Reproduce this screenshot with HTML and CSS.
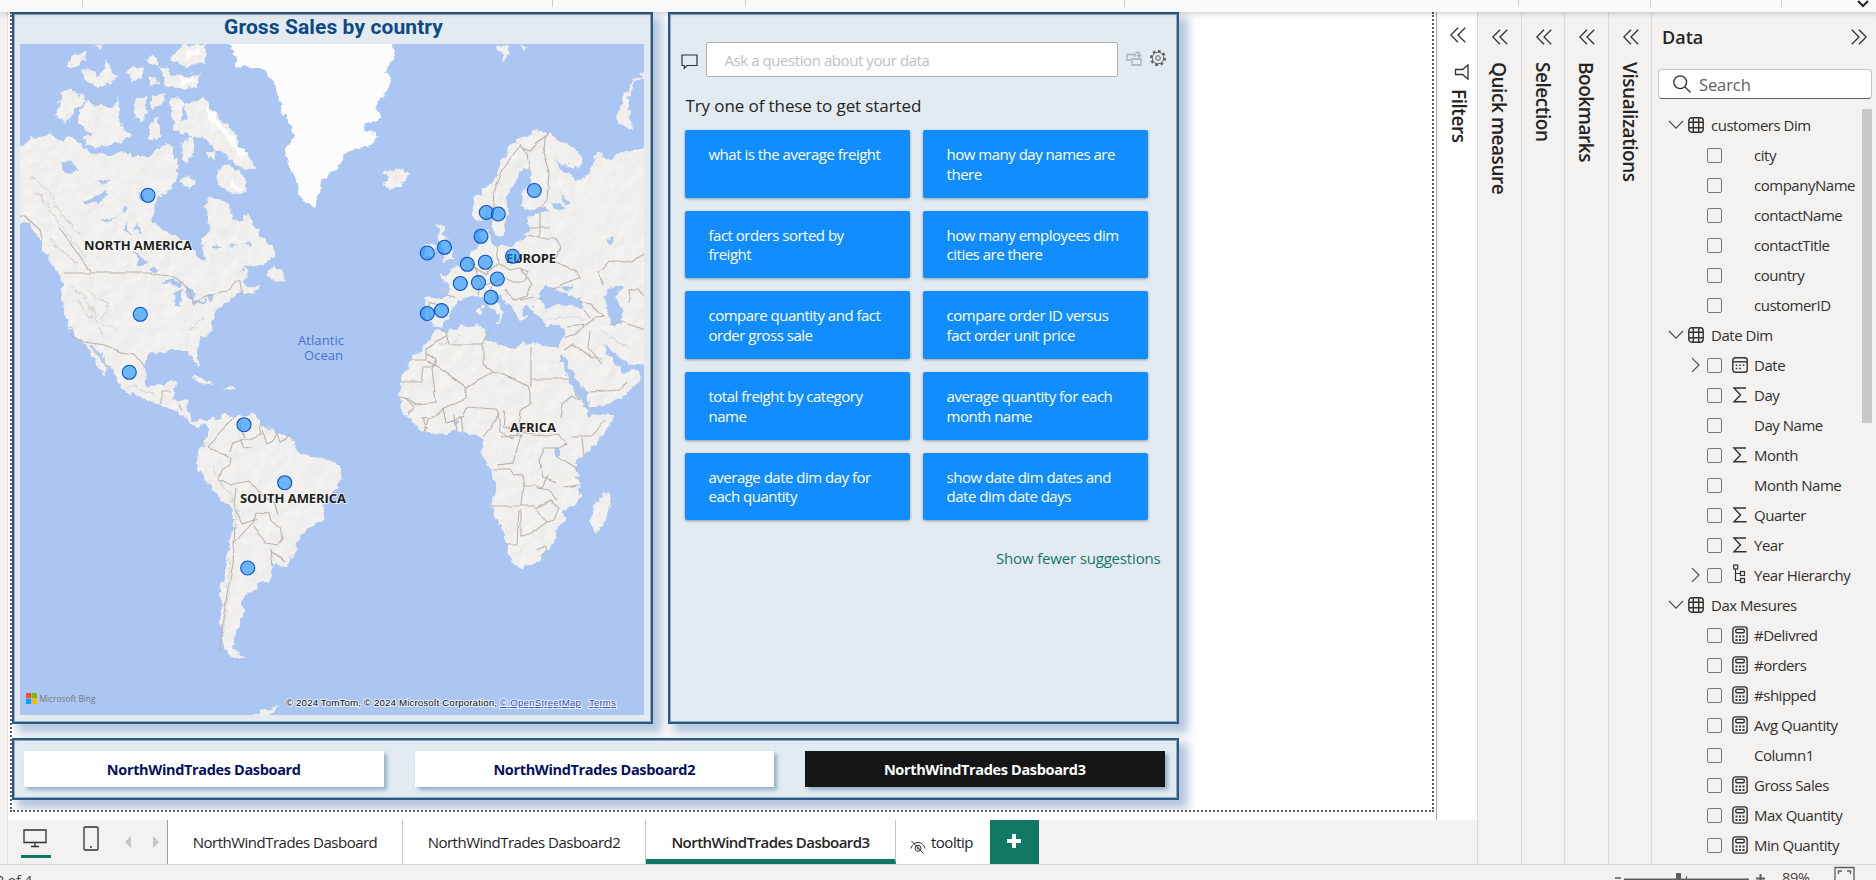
FILE: index.html
```html
<!DOCTYPE html>
<html lang="en">
<head>
<meta charset="utf-8">
<title>NorthWindTrades</title>
<link rel="stylesheet" href="styles.css">
</head>
<body>
<svg width="0" height="0" class="defs" aria-hidden="true">
  <symbol id="chev2" viewBox="0 0 16 16"><path d="M8 .8.8 8 8 15.200M15.200.8 8 8l7.200 7.200"/></symbol>
  <symbol id="down" viewBox="0 0 16 16"><path d="M1 4l7 7.200L15 4"/></symbol>
  <symbol id="right" viewBox="0 0 16 16"><path d="M4 1.200l7 6.800-7 6.800"/></symbol>
  <symbol id="table" viewBox="0 0 16 16"><rect x=".8" y=".8" width="14.400" height="14.400" rx="3"/><path d="M5.300 1v14M10.700 1v14M1 5.300h14M1 10.700h14"/></symbol>
  <symbol id="sigma" viewBox="0 0 16 16"><path d="M14 1H2l6.500 7L2 14.800h12.500"/></symbol>
  <symbol id="cal" viewBox="0 0 16 16"><rect x=".8" y=".8" width="14.400" height="14.400" rx="2.500"/><path d="M1 4.800h14"/><path d="M7.200 8.200h1.600M10.800 8.200h1.600M3.700 11.500h1.600M7.200 11.500h1.600M3.700 8.200h1.600"/></symbol>
  <symbol id="tree" viewBox="0 0 16 20"><path d="M3.500 5v11.500h5M3.500 9.500h5"/><rect x="1.700" y="1" width="4" height="4"/><rect x="8.500" y="7.500" width="4" height="4"/><rect x="8.500" y="14.500" width="4" height="4"/></symbol>
  <symbol id="calc" viewBox="0 0 16 18"><rect x=".9" y=".9" width="14.200" height="16.200" rx="2.600"/><rect x="3.800" y="3.200" width="8.400" height="3.600" rx="1"/><path stroke-width="2" d="M3.500 10.500h2M7 10.500h2M10.500 10.500h2M3.500 14h2M7 14h2M10.500 14h2"/></symbol>
</svg>
<div class="app">
  <header class="ribbon">
    <i></i><i></i><i></i><i></i><i></i><i></i><i></i>
    <svg viewBox="0 0 12 8"><path d="M1 1l5 5 5-5"/></svg>
  </header>
  <div class="main">
    <div class="rail"></div>
    <div class="work">
      <div class="stage">
        <div class="canvas">
          <div class="page">
            <section class="card map-card">
              <h2>Gross Sales by country</h2>
              <div class="map">
                <svg viewBox="20 44 624 671" width="624" height="671">
                  <defs>
                    <filter id="rough" x="0" y="0" width="100%" height="100%"><feTurbulence type="fractalNoise" baseFrequency=".12" numOctaves="3" seed="4"/><feDisplacementMap in="SourceGraphic" scale="9" xChannelSelector="R" yChannelSelector="G"/></filter>
                    <filter id="fine" x="0" y="0" width="100%" height="100%"><feTurbulence type="fractalNoise" baseFrequency=".06" numOctaves="2" seed="7"/><feDisplacementMap in="SourceGraphic" scale="4" xChannelSelector="R" yChannelSelector="G"/></filter>
                    <filter id="relief" x="0" y="0" width="100%" height="100%"><feTurbulence type="fractalNoise" baseFrequency=".07" numOctaves="3" seed="11" result="n"/><feDiffuseLighting in="n" surfaceScale=".7" diffuseConstant="1.060" lighting-color="#f3f2ef" result="l"><feDistantLight azimuth="225" elevation="68"/></feDiffuseLighting><feComposite in="l" in2="SourceGraphic" operator="in"/></filter>
                  </defs>
                  <rect x="20" y="44" width="624" height="671" fill="#abc6f2"/>
                  <g filter="url(#rough)">
                    <g fill="#f1f0ed" filter="url(#relief)">
                      <path d="M10 150L28 143 32 137 42 138 50 133 58 140 72 138 80 142 84 150 95 152 110 155 122 151 132 157 147 157 158 148 166 142 172 145 174 158 180 165 176 178 170 190 158 195 155 202 153 212 155 222 162 230 175 235 188 242 194 250 200 260 204 258 203 248 202 240 210 232 208 220 206 205 208 197 220 199 231 207 234 222 240 220 248 214 254 222 262 238 272 245 275 257 262 264 248 266 238 275 246 270 248 276 243 284 250 288 262 284 255 292 243 296 240 290 230 300 218 308 212 320 213 330 200 340 195 350 196 358 200 365 197 368 193 358 188 350 172 350 160 353 150 355 144 362 144 372 145 385 150 388 155 386 165 386 168 382 177 381 174 390 172 399 180 400 189 402 188 415 193 420 200 421 207 421 215 418 225 413 230 418 240 415 255 416 262 425 275 432 290 437 297 450 305 455 320 458 335 463 342 470 341 478 333 492 325 500 323 520 310 527 300 535 297 548 290 560 285 567 272 565 273 575 268 582 256 583 255 592 245 594 243 603 243 617 236 630 234 643 232 648 245 658 235 659 225 650 222 640 220 625 222 600 222 585 226 570 230 545 233 520 232 508 222 500 212 492 205 478 197 467 197 460 199 448 205 442 210 430 207 426 193 425 183 416 165 406 150 401 138 396 122 389 119 382 112 370 103 357 94 345 90 344 98 357 106 369 107 375 99 368 92 355 86 344 78 340 72 330 64 315 61 300 62 285 60 275 52 262 42 250 42 240 34 230 25 222 10 217Z"/>
                      <path d="M80 110L88 102 100 105 112 108 119 97 118 115 125 130 132 137 118 143 100 148 85 145 83 138 92 134 80 125ZM62 92L70 89 82 95 86 103 75 108 70 120 64 124 57 115 60 100ZM160 65L175 77 200 74 198 87 175 88 163 84ZM170 58L182 45 205 44 205 62 185 66ZM82 70L92 68 98 78 107 60 112 72 118 78 110 82 97 88 85 80ZM66 68L75 53 86 52 82 62 72 70ZM127 72L135 65 143 68 143 80 132 82ZM150 76l6 0 2 8-8 2ZM133 100L145 97 148 115 140 123 135 112ZM152 96L165 94 162 105 152 108ZM150 120L158 118 162 138 150 140ZM148 57l10 2 0 7-8-3ZM95 44l10 2-4 5ZM170 100L180 96 183 108 180 122 188 118 184 104 205 99 215 112 228 125 238 138 240 150 252 160 256 168 248 172 232 160 215 150 205 138 190 137 175 130 170 115ZM222 165L235 168 242 175 248 190 240 196 228 190 215 180ZM180 180L190 175 197 185 187 190ZM184 140L194 138 194 152 187 165 182 158ZM208 152l8 0-2 8-6-2ZM266 276l8-10 8 5 4 8-10 1Z"/>
                      <path d="M383 172L392 170 405 168 409 175 402 184 390 188 383 184 387 178ZM497 44L510 46 505 62 498 52ZM519 46l9 0-4 5ZM650 68L632 85 627 100 633 128 622 126 616 118 620 105 625 92 635 78Z"/>
                      <path d="M660 145L635 150 620 152 606 160 596 150 594 162 590 172 578 180 564 172 553 160 570 168 580 165 582 155 572 146 560 142 548 132 535 130 520 138 508 148 500 165 493 182 480 192 472 200 472 218 480 220 488 215 492 222 495 235 502 236 505 222 508 212 506 200 510 190 517 180 524 168 532 172 530 182 522 192 521 205 526 210 545 207 550 212 538 213 528 217 530 228 526 232 522 240 510 245 496 246 490 240 489 228 481 232 481 243 472 252 463 262 455 268 448 274 440 274 442 280 449 285 450 298 440 299 426 297 424 303 427 308 425 318 428 322 436 326 444 325 450 315 454 308 460 300 470 297 478 296 484 300 492 310 500 316 499 322 506 313 500 307 494 296 492 290 500 295 508 303 515 312 520 322 525 318 521 308 530 305 536 312 545 325 558 325 566 327 563 338 559 347 540 345 522 342 515 349 495 343 484 338 486 330 480 325 460 327 445 332 437 328 428 340 420 352 412 360 402 375 400 390 401 405 403 412 410 420 420 430 430 435 448 433 462 430 470 435 478 437 484 440 482 450 484 460 492 470 495 485 492 500 491 506 498 520 503 535 508 550 512 565 522 567 538 561 550 548 556 538 557 530 565 520 562 512 575 505 580 500 580 490 577 475 575 465 585 453 595 445 605 432 612 420 613 413 600 415 590 415 586 408 580 400 573 390 567 376 560 360 563 354 569 366 575 375 585 390 590 405 592 408 610 402 625 395 635 385 642 378 636 372 630 370 625 374 618 367 608 353 602 345 610 348 622 361 635 365 660 366Z"/>
                      <path d="M437 223L445 227 443 235 450 245 455 258 440 263 446 252 438 240ZM428 243L436 246 434 257 424 258ZM188 377L200 377 214 385 200 383ZM222 388L232 386 236 391ZM608 492L611 500 606 515 602 528 596 533 591 528 592 512 593 503 602 498ZM492 320l9 0-2 3ZM479 306l4 0 0 9-4 0ZM252 715l12-5 14-4-8 9Z"/>
                    </g>
                    <path fill="#fcfcfc" d="M228 40L235 55 235 66 250 68 265 70 275 85 279 100 283 115 290 125 294 135 286 150 288 165 295 180 298 195 308 203 315 207 318 195 322 180 332 170 338 168 345 155 355 150 370 145 381 134 366 130 362 125 380 118 375 105 385 95 390 80 384 70 395 58 392 40Z"/>
                    <path class="snow" d="M180 82l14-4M186 56l14-5M205 108l12 14 14 16 12 18M230 182l12 8"/>
                    <g fill="#abc6f2">
                      <path d="M540 290L548 285 560 292 572 296 585 301 583 308 560 305 545 309 540 302ZM608 290L616 284 622 288 614 296 622 305 620 326 610 324 607 308 603 298ZM560 286l14-3-8 8ZM160 283l12-5 12 3-6 5ZM175 292l7-4-2 18-4 0ZM186 286l10 6-2 10-6-6ZM191 304l14-5 2 3-14 5ZM206 297l10-2-4 5ZM135 250l6 6 6 8-6 2-5-8ZM150 267l5 1 5 4-8-2ZM60 162l12 1 8 8-14 2ZM86 200l16-6 8-2-14 12-8 1ZM96 180l14 0-6 4ZM98 220l20-4-12 6ZM136 194l8 2-2 6ZM122 206l8 4-6 2ZM134 220l8 14-6-4ZM126 222l5 12-5-3ZM550 202l16 5-6 4ZM560 190l8 12-4 3ZM553 448l7 0 0 8-6 0ZM212 246l6-3 4 3-6 2ZM228 247l7-2 3 3ZM244 243l8-1 0 5ZM606 240l8-3-4 9ZM454 421l3-2 0 9Z"/>
                    </g>
                  </g>
                  <g class="borders" filter="url(#fine)">
                    <path d="M63 273H150L160 275 172 276 182 283 190 290 192 304 206 297 220 291 228 290 236 281 240 282 242 296M20 217L26 215 40 230 42 240M70 334L85 342 105 345 121 352 134 354 144 367M60 228L90 272M162 403l0-11 9 0M178 404l4 8"/>
                    <path d="M208 447L220 432 227 425 236 416M208 447l12 6 11 5-1 6-8 6-3 9 12 6 7-2 11-2 12 14 14 8 3 12M230 452l3-10 12-4-5-16M240 438l4 10 8-1M245 440l16-6-2-8M262 430l5 14 6-3 4-8M277 433l3 9 6-3 3-6M236 488l-2 18 7 18M241 524l12-4 4-8 12 1 2 8 9 6 3 12-5 6-13-2-12-17M270 548l2 17M270 550l14 12M235 524l-2 40-6 30-5 30-2 28M256 518l-22 24"/>
                    <path d="M492 222l2-30 10-25 15-20 11 4 10-10 8-6M530 172l-3-18-8-9M548 132l-5 20 6 20-2 28-7 10M528 235l12 3 16 0 5 10-5 10M530 228h20M540 213l0 25M497 246l2 18 10 6 10-2 10 4-4 8-12 3-10-5-10 4-4 8M498 264l-12 10-8-4-8-8M472 262l6 14 4 8M455 297l-10-2M478 296l2-10 10-4M528 258l26 4 22 8 4 8-18 6-10 5M520 268l12 16-5 12-12 4-10-10M520 300l14-3 6 2M430 302l0 18M454 308l-26-6M578 302l14 2 12 12-14 2-6-8M566 327l20-2 8-6M600 272l10-12 22 3 12-10M603 285l-5-14M610 326l14-4 20 8M590 330l-2 18 14 16M564 338l12-4 8-8M564 350l10-6 18 14 10 1M628 304l2-14 8-2 6 8"/>
                    <path d="M412 360h14l0-12 20-12M425 352l11 8 0 6-12 0-2 16-22 0M427 360l39 28 27-16 8 2 27 12 2 6 0 12-9 8-3 20-15-6 2-16M446 332l3 12 34 0 0 20 10 8M483 344l6-12M531 347v40M531 379l38 0M436 360l-4 8 4 34-20 2-6-4-10-2M466 388l0 10-22 10-6 8-10 2-3 16M443 410l3 12 16-5 4-10 30 2 3 4-8 14-8 10M454 414l2 18M460 416l2 16M498 412l2 20 13 6 6-6 28 4 12-2 8 10-8 4-14 0-6 12 4 18 14 5M501 436l20-1-8 28-16 2M494 469h16l4 6 8-1 2 12 12 0 6 2 6-12M524 486l-2 20-32 0M522 506l12 0 12 16-16 12-9 2 0-26M519 510l-2 34-12 0M546 522l8-2 5-12-8-8-16 8M536 488l14 2 6 10M563 487l16-2M556 455l22 14M582 438l2 20M560 418l2-14 10-8 8 4M572 436l20 0 14-16M590 392l30-2 8-8M537 549l8-4 2 6-8 4M403 398l12 8-8 8M428 430l-6-12 6-1"/>
                  </g>
                  <g class="ridges" filter="url(#rough)">
                    <path d="M30 175l20 18 10 20 20 22M34 190l16 18 18 28 18 20M50 240l16 14 14 12M70 285l16 14 10 18M76 300l20 22 6 14M88 290l20 16-6 16 14 10M210 466l14 20 12 20 0 20M230 560l-3 40-4 38M205 316l-18 16M90 345l14 18 12 14M130 385l26 10M440 345l20-8M440 290l8 0M545 318l40 0M600 330l30 20M575 388l10 18"/>
                  </g>
                  <g class="pins">
                    <circle cx="148" cy="195.300" r="7"/><circle cx="140.300" cy="314.300" r="7"/><circle cx="129.300" cy="372.300" r="7"/><circle cx="244" cy="424.700" r="7"/><circle cx="284.700" cy="482.700" r="7"/><circle cx="247.700" cy="568" r="7"/>
                    <circle cx="534.300" cy="190.500" r="7"/><circle cx="486.300" cy="212.500" r="7"/><circle cx="498.300" cy="214" r="7"/><circle cx="481" cy="236.300" r="7"/><circle cx="427.300" cy="253" r="7"/><circle cx="444.500" cy="247.300" r="7"/><circle cx="467.300" cy="264.300" r="7"/><circle cx="485.300" cy="262.300" r="7"/><circle cx="460.300" cy="283.500" r="7"/><circle cx="478.500" cy="282.600" r="7"/><circle cx="497.300" cy="279" r="7"/><circle cx="491" cy="297.300" r="7"/><circle cx="427.300" cy="313.500" r="7"/><circle cx="441.500" cy="310.500" r="7"/>
                  </g>
                  <g class="places">
                    <text x="84" y="250" textLength="108">NORTH AMERICA</text>
                    <text x="506" y="263" textLength="50">EUROPE</text>
                    <text x="510" y="432" textLength="46">AFRICA</text>
                    <text x="240" y="503" textLength="106">SOUTH AMERICA</text>
                  </g>
                  <g class="pins"><circle cx="512.600" cy="256.300" r="7"/></g>
                  <g class="ocean"><text x="298" y="345" textLength="46">Atlantic</text><text x="304" y="360" textLength="39">Ocean</text></g>
                  <rect x="26" y="693" width="5.200" height="5.200" fill="#f25022"/><rect x="31.800" y="693" width="5.200" height="5.200" fill="#7fba00"/><rect x="26" y="698.800" width="5.200" height="5.200" fill="#00a4ef"/><rect x="31.800" y="698.800" width="5.200" height="5.200" fill="#ffb900"/>
                  <text class="bing" x="39.500" y="702" textLength="56" lengthAdjust="spacingAndGlyphs">Microsoft Bing</text>
                  <g class="credit"><text x="286" y="706" textLength="211">© 2024 TomTom, © 2024 Microsoft Corporation,</text><text class="lnk" x="500" y="706" textLength="81">© OpenStreetMap</text><text class="lnk" x="589" y="706" textLength="27">Terms</text></g>
                </svg>
              </div>
            </section>
            <section class="card qna">
              <div class="ask">
                <svg class="ic comment" viewBox="0 0 17 16"><path d="M1 1h15v10.500H6L3.300 14.300v-2.800H1z"/></svg>
                <div class="ask-box">Ask a question about your data</div>
                <svg class="ic conv" viewBox="0 0 16 15"><path d="M5 9H1V3.500h8V6M6 8h9v6H6zM9.500 1.500H13V6M11 4l2 2 2-2"/></svg>
                <svg class="ic gear" viewBox="0 0 16 16"><circle cx="8" cy="8" r="2.300"/><circle cx="8" cy="8" r="5.800"/><circle cx="8" cy="8" r="7" class="teeth" pathLength="80"/></svg>
              </div>
              <h3>Try one of these to get started</h3>
              <div class="tiles">
                <div>what is the average freight</div><div>how many day names are<br>there</div>
                <div>fact orders sorted by<br>freight</div><div>how many employees dim<br>cities are there</div>
                <div>compare quantity and fact<br>order gross sale</div><div>compare order ID versus<br>fact order unit price</div>
                <div>total freight by category<br>name</div><div>average quantity for each<br>month name</div>
                <div>average date dim day for<br>each quantity</div><div>show date dim dates and<br>date dim date days</div>
              </div>
              <div class="fewer">Show fewer suggestions</div>
            </section>
            <nav class="card navs">
              <div>NorthWindTrades Dasboard</div><div>NorthWindTrades Dasboard2</div><div class="on">NorthWindTrades Dasboard3</div>
            </nav>
          </div>
        </div>
        <aside class="filters">
          <svg class="ic c2"><use href="#chev2"/></svg>
          <svg class="ic funnel" viewBox="0 0 15 16"><path d="M14 1v14L8.500 10.500H1.500v-5H8.500z"/></svg>
          <span>Filters</span>
        </aside>
      </div>
      <div class="tabs">
        <div class="modes">
          <span class="mode"><svg class="ic" width="24" height="19" viewBox="0 0 24 19"><path d="M1 1h22v12.500H1zM12 13.500V17M8 17.500h8"/></svg></span>
          <svg class="ic phone" width="16" height="25" viewBox="0 0 16 25"><rect x="1" y="1" width="14" height="23" rx="1"/><path d="M7 21h2"/></svg>
          <svg class="arr" width="36" height="12" viewBox="0 0 36 12"><path d="M7 0v12L1 6zM29 0v12l6-6z"/></svg>
        </div>
        <div class="tab t1">NorthWindTrades Dasboard</div>
        <div class="tab t2">NorthWindTrades Dasboard2</div>
        <div class="tab t3">NorthWindTrades Dasboard3</div>
        <div class="tab t4"><svg class="ic" width="16" height="14" viewBox="0 0 16 14"><path d="M1 8.500C2 4.500 5 2.500 8 2.500s6 2 7 6M1.500 1l12 12.500"/><circle cx="8" cy="8.300" r="3"/><circle cx="8" cy="8.300" r=".8"/></svg>tooltip</div>
        <div class="add"><svg width="14" height="14" viewBox="0 0 14 14"><path d="M7 0v14M0 7h14"/></svg></div>
      </div>
    </div>
    <aside class="pane p1"><svg class="ic c2"><use href="#chev2"/></svg><span>Quick measure</span></aside>
    <aside class="pane p2"><svg class="ic c2"><use href="#chev2"/></svg><span>Selection</span></aside>
    <aside class="pane p3"><svg class="ic c2"><use href="#chev2"/></svg><span>Bookmarks</span></aside>
    <aside class="pane p4"><svg class="ic c2"><use href="#chev2"/></svg><span>Visualizations</span></aside>
    <aside class="data">
      <div class="data-head"><b>Data</b><svg class="ic c2 flip"><use href="#chev2"/></svg></div>
      <div class="search"><svg class="ic" width="18" height="18" viewBox="0 0 18 18"><circle cx="7.200" cy="7.200" r="6.400"/><path d="M12 12l5.500 5.500"/></svg>Search</div>
      <div class="list">
        <div class="rows">
          <div class="row top"><svg class="ic"><use href="#down"/></svg><svg class="ic tb"><use href="#table"/></svg><b>customers Dim</b></div>
          <div class="row"><s></s><i></i><u></u><b>city</b></div>
          <div class="row"><s></s><i></i><u></u><b>companyName</b></div>
          <div class="row"><s></s><i></i><u></u><b>contactName</b></div>
          <div class="row"><s></s><i></i><u></u><b>contactTitle</b></div>
          <div class="row"><s></s><i></i><u></u><b>country</b></div>
          <div class="row"><s></s><i></i><u></u><b>customerID</b></div>
          <div class="row top"><svg class="ic"><use href="#down"/></svg><svg class="ic tb"><use href="#table"/></svg><b>Date Dim</b></div>
          <div class="row"><s><svg class="ic"><use href="#right"/></svg></s><i></i><u><svg class="ic dk"><use href="#cal"/></svg></u><b>Date</b></div>
          <div class="row"><s></s><i></i><u><svg class="ic dk"><use href="#sigma"/></svg></u><b>Day</b></div>
          <div class="row"><s></s><i></i><u></u><b>Day Name</b></div>
          <div class="row"><s></s><i></i><u><svg class="ic dk"><use href="#sigma"/></svg></u><b>Month</b></div>
          <div class="row"><s></s><i></i><u></u><b>Month Name</b></div>
          <div class="row"><s></s><i></i><u><svg class="ic dk"><use href="#sigma"/></svg></u><b>Quarter</b></div>
          <div class="row"><s></s><i></i><u><svg class="ic dk"><use href="#sigma"/></svg></u><b>Year</b></div>
          <div class="row"><s><svg class="ic"><use href="#right"/></svg></s><i></i><u><svg class="ic dk tall"><use href="#tree"/></svg></u><b>Year Hierarchy</b></div>
          <div class="row top"><svg class="ic"><use href="#down"/></svg><svg class="ic tb"><use href="#table"/></svg><b>Dax Mesures</b></div>
          <div class="row"><s></s><i></i><u><svg class="ic dk mid"><use href="#calc"/></svg></u><b>#Delivred</b></div>
          <div class="row"><s></s><i></i><u><svg class="ic dk mid"><use href="#calc"/></svg></u><b>#orders</b></div>
          <div class="row"><s></s><i></i><u><svg class="ic dk mid"><use href="#calc"/></svg></u><b>#shipped</b></div>
          <div class="row"><s></s><i></i><u><svg class="ic dk mid"><use href="#calc"/></svg></u><b>Avg Quantity</b></div>
          <div class="row"><s></s><i></i><u></u><b>Column1</b></div>
          <div class="row"><s></s><i></i><u><svg class="ic dk mid"><use href="#calc"/></svg></u><b>Gross Sales</b></div>
          <div class="row"><s></s><i></i><u><svg class="ic dk mid"><use href="#calc"/></svg></u><b>Max Quantity</b></div>
          <div class="row"><s></s><i></i><u><svg class="ic dk mid"><use href="#calc"/></svg></u><b>Min Quantity</b></div>
        </div>
        <div class="thumb"></div>
      </div>
    </aside>
  </div>
  <footer class="status">
    <span class="pg">2 of 4</span>
    <svg class="zoom" width="160" height="15" viewBox="0 0 160 15"><path d="M0 13h6M9 14.200h125" stroke-width="1.500"/><path d="M61 8h5v7h-5z" fill="#605e5c" stroke="none"/><path d="M71.500 11v4" stroke-width="1"/><path d="M141 13.500h9M145.500 9v6" stroke-width="2"/></svg>
    <span class="pct">89%</span>
    <svg class="fit" width="21" height="15" viewBox="0 0 21 15"><path d="M1 15V2.500h19V15M4.500 9V6H8M13 6h3.500v3"/></svg>
  </footer>
</div>
</body>
</html>
```
FILE: styles.css
```css
*{box-sizing:border-box}
body{margin:0;width:1876px;height:880px;overflow:hidden;background:#f3f2f1;color:#252423;font-family:"Open Sans","Noto Sans",sans-serif;font-size:15px}
.defs{position:absolute}
.app{display:flex;flex-direction:column;height:880px}
.ic{fill:none;stroke:#323130;stroke-width:1.3;flex:none}
.ribbon{position:relative;z-index:2;flex:none;height:12px;background:#fafafa;box-shadow:0 1px 6px rgba(0,0,0,.22);display:grid;grid-template-columns:82px 470px 193px 379px 394px 132px 131px 76px 12px;grid-template-rows:7px}
.ribbon i{border-right:1px solid #d0cecc;margin-right:-1px}
.ribbon svg{width:12px;height:8px;grid-column:9;fill:none;stroke:#252423;stroke-width:2}
.main{flex:none;display:flex;height:853px;border-bottom:1px solid #dddbd9}
.rail{width:8px;border-right:1px solid #e1dfdd}
.work{width:1469px;display:flex;flex-direction:column}
.stage{display:flex;height:808px}
.canvas{width:1428px;background:#fff;padding:0 1px 8px 2px}
.page{width:1424px;height:800px;overflow:hidden;border:2px dotted #605e5c;border-top:0;display:grid;grid-template:712px 62px/641px 511px;gap:14px 14.500px;align-content:start}
.card{background:#e3ebf1;border:2px solid #2b5a84;outline:1px solid rgba(43,90,132,.45);outline-offset:-3px;box-shadow:7px 7px 9px 2px rgba(120,152,190,.55)}
.map-card{padding:0 6px;display:flex;flex-direction:column}
.map-card h2{margin:0;height:30px;font:700 21px/26px Roboto,sans-serif;letter-spacing:.1px;text-align:center;color:#0b4a86;padding-left:2px}
.map{height:671px}
.map svg{display:block}
.snow{fill:none;stroke:#fff;stroke-width:5}
.borders{fill:none;stroke:#b9b3ad;stroke-width:1.1}
.ridges{fill:none;stroke:#d4d0cb;stroke-width:1.2;opacity:.8}
.pins circle{fill:#118dff;fill-opacity:.6;stroke:#0b50c8;stroke-width:1.1}
.places{font:700 13px "Open Sans",sans-serif;fill:#1f1f1f;paint-order:stroke;stroke:#fff;stroke-opacity:.6;stroke-width:2px}
.ocean{font:13px "Open Sans",sans-serif;fill:#4b6fce}
.bing{font:9.500px "Open Sans",sans-serif;fill:#777}
.credit{font:9.800px "Liberation Sans",sans-serif;fill:#111;paint-order:stroke;stroke:#fff;stroke-opacity:.7;stroke-width:2px}
.credit .lnk{fill:#2f50b8;text-decoration:underline}
.qna{padding:28px 11px 0 11px}
.ask{display:flex;height:35px}
.comment{width:17px;height:16px;margin:12px 8px 0 0;stroke-width:1.2}
.ask-box{width:412px;background:#fff;border:1px solid #b3b0ad;border-radius:2px;padding-left:18px;line-height:34px;color:#c2c0be;letter-spacing:-.43px}
.conv{width:16px;height:15px;margin:9px 8px 0 8px;stroke:#a8adb2}
.gear{width:16px;height:16px;margin-top:8px;stroke:#605e5c;stroke-width:1}
.teeth{stroke-width:2;stroke-dasharray:5 5}
h3{margin:14px 0 0 5px;font-weight:400;font-size:17px;line-height:30px;letter-spacing:-.1px;color:#252423}
.tiles{margin:9px 0 0 4px;display:grid;grid-template-columns:225px 225px;grid-auto-rows:67.600px;gap:13.100px}
.tiles div{background:#118dff;border-radius:2px;box-shadow:0 1px 3px rgba(0,0,0,.35);color:#fff;padding:15px 0 0 24px;line-height:19.600px;letter-spacing:-.5px;white-space:nowrap}
.fewer{margin:25px 5px 0 0;text-align:right;color:#117865;line-height:26px;letter-spacing:-.17px}
.navs{grid-column:1/3;display:flex;gap:31px;padding:11px 10px}
.navs div{width:359.500px;height:36px;background:#fff;box-shadow:3px 3px 4px rgba(90,135,170,.6);text-align:center;font-weight:700;font-size:14.500px;line-height:37px;letter-spacing:-.35px;color:#06105e}
.navs .on{background:#161616;color:#fff}
.filters{width:41px;background:#fff;border-left:1px solid #a8a6a4;display:flex;flex-direction:column;align-items:flex-start;padding:15px 0 0 13px}
.c2{width:16px;height:16px}
.funnel{width:15px;height:16px;margin:21px 0 0 4px}
.filters span,.pane span{writing-mode:vertical-rl;font-weight:600;font-size:19px;line-height:26px;letter-spacing:-.45px;white-space:nowrap}
.filters span{margin:9px 0 0 -4px}
.tabs{display:flex;height:44px}
.modes{width:160px;border-right:1px solid #a19f9d;display:flex;align-items:flex-start}
.mode{margin:9px 32px 0 13px;width:30px;height:29px;border-bottom:3px solid #117865;padding-left:2px}
.modes .phone{margin-top:6px}
.arr{margin:16px 0 0 25px;fill:#c8c6c4}
.tab{background:#fff;border-right:1px solid #c8c6c4;text-align:center;line-height:44px;letter-spacing:-.5px;white-space:nowrap}
.t1{width:235px}.t2{width:243px}.t3{width:250px;border-bottom:5px solid #117865;font-weight:600;letter-spacing:-.53px}
.t4{width:94px;border:0;display:flex;padding-left:14px;gap:5px}
.t4 svg{margin-top:20px;stroke-width:1}
.add{width:49px;background:#117865;padding:14px 17px}
.add svg{display:block;stroke:#fff;stroke-width:4}
.pane{width:43.500px;border-left:1px solid #dddbd9;padding:17px 0 0 14px;display:flex;flex-direction:column;align-items:flex-start}
.pane span{margin:17px 0 0 -6px}
.data{width:225px;border-left:1px solid #dddbd9;overflow:hidden}
.data-head{height:57px;display:flex;justify-content:space-between;padding:17px 9px 0 10px;font-size:18px;line-height:16px}
.data-head b{font-weight:600}
.flip{transform:scaleX(-1)}
.search{margin-left:6px;width:214px;height:30px;background:#fff;border:1px solid #c8c6c4;border-bottom-color:#605e5c;border-radius:4px;display:flex;gap:8px;padding:5px 0 0 14px;font-size:16.500px;line-height:19px;letter-spacing:-.1px;color:#605e5c}
.list{display:flex;height:765px;overflow:hidden}
.rows{width:210px;padding-top:11px}
.row{height:30px;display:flex;align-items:center;padding-left:36px}
.row .ic{width:16px;height:16px;display:block;stroke:#484644;stroke-width:1.1}
.row .tb,.row .dk{stroke:#323130;stroke-width:1.4}
.row .mid{height:18px}
.row .tall{height:20px;margin-top:-2px;stroke-width:1.2}
.row.top{padding-left:16px}
.row.top .tb{margin-left:4px;margin-right:7px}
.row b{font-weight:400;letter-spacing:-.48px;white-space:nowrap;padding-bottom:1px;color:#323130}
.row s{width:19px;flex:none}
.row i{width:15px;height:15px;border:1px solid #797775;border-radius:2px;flex:none}
.row u{width:16px;margin:0 6px 0 10px;flex:none}
.thumb{width:10px;height:314px;margin-top:10px;background:#c8c8c8;flex:none}
.status{height:15px;overflow:hidden;display:flex;color:#484644;font-size:14.500px;line-height:20px;letter-spacing:-.3px}
.pg{width:1615px;padding:6px 0 0;text-indent:-4px}
.zoom{stroke:#605e5c;fill:none}
.pct{width:49px;padding:3px 0 0 7px}
.fit{margin-left:10px;fill:none;stroke:#605e5c;stroke-width:1.3}
```
